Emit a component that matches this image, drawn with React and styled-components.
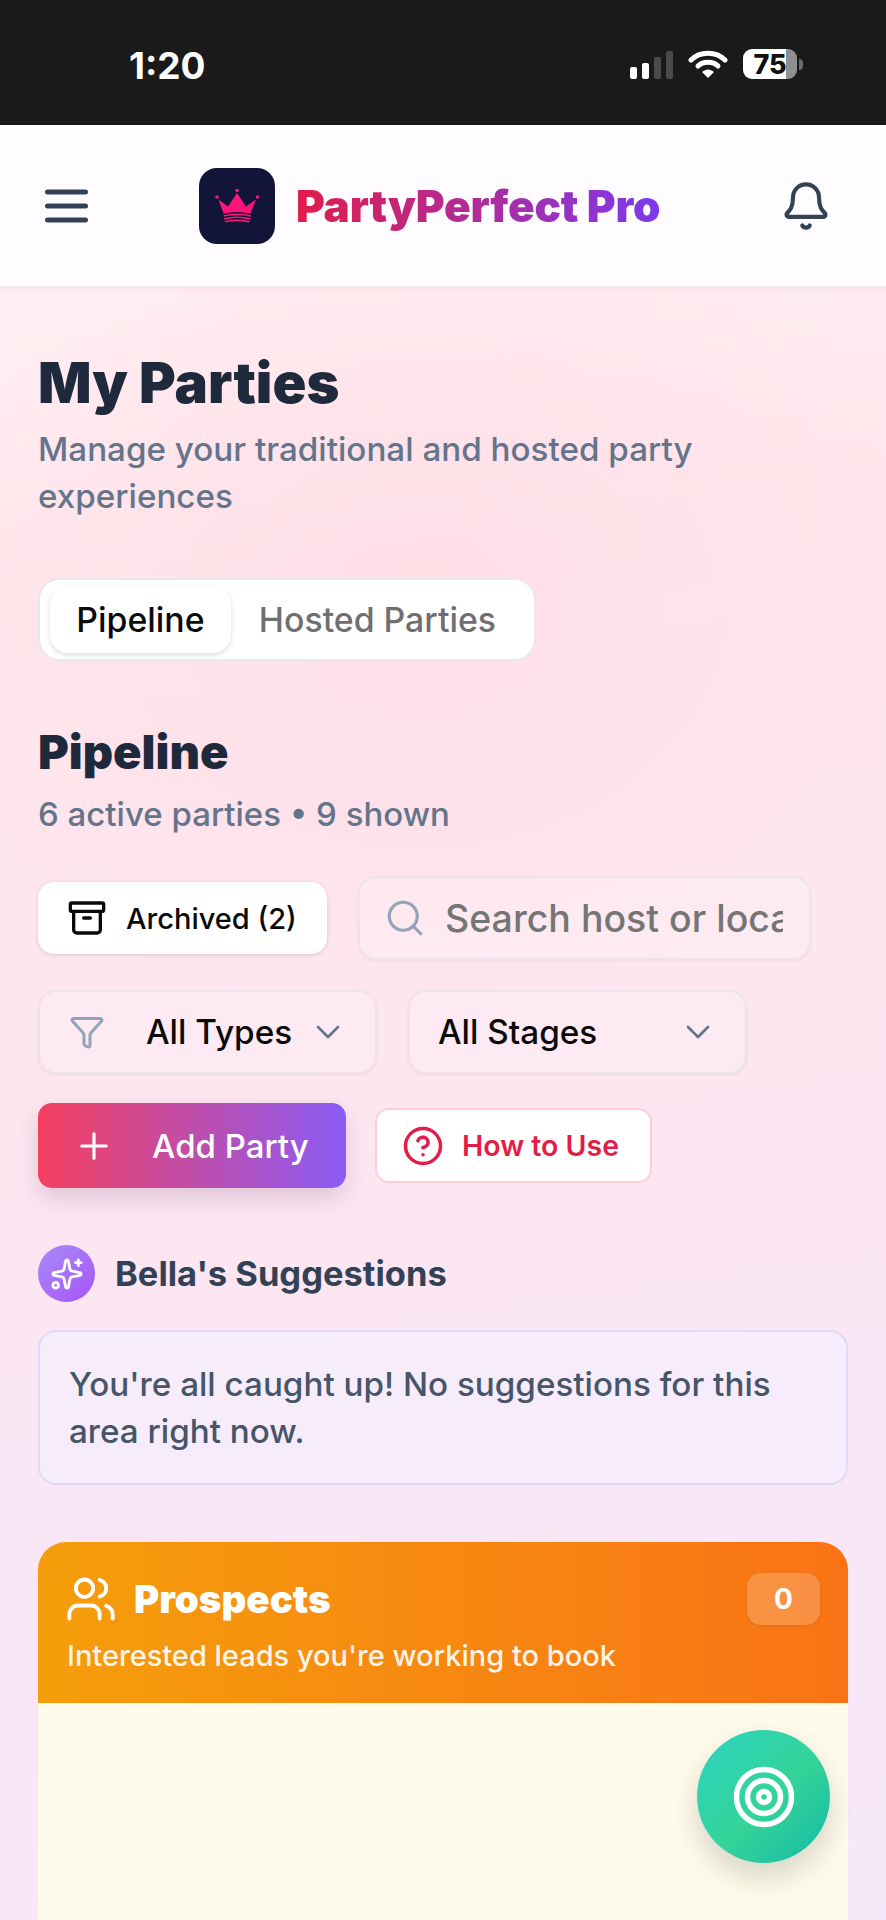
import React from "react";
import styled, { createGlobalStyle } from "styled-components";
import { Bell, Archive, Search, Funnel, ChevronDown, Plus, CircleHelp, Sparkles, Users, Target } from "lucide-react";

const Global = createGlobalStyle`
  html, body { margin: 0; padding: 0; }
  body { font-family: Inter, "Noto Sans", sans-serif; width: 886px; height: 1920px; overflow: hidden; }
  * { box-sizing: border-box; }
`;

const Page = styled.div`
  position: relative;
  width: 886px;
  height: 1920px;
  overflow: hidden;
  background:
    radial-gradient(520px 420px at 420px 600px, rgba(255, 218, 228, 0.7), rgba(255, 220, 230, 0) 100%),
    linear-gradient(172deg, #fff1f4 12%, #ffe6ec 30%, #fde6f0 55%, #f9e6f6 80%, #f6e8fa 100%);
`;

const StatusBar = styled.div`
  height: 125px;
  background: #1a1a1a;
  display: flex;
  align-items: flex-end;
  justify-content: space-between;
  padding: 0 83px 46px 129px;
  color: #fff;
`;
const Clock = styled.span`
  font-size: 37px;
  font-weight: 700;
  line-height: 26px;
  height: 26px;
`;
const StatusIcons = styled.div`
  display: flex;
  align-items: flex-end;
  gap: 15px;
`;
const Signal = styled.div`
  display: flex;
  align-items: flex-end;
  gap: 5px;
`;
const SignalBar = styled.i`
  display: block;
  width: 7px;
  height: ${(p) => p.$h}px;
  border-radius: 2px;
  background: ${(p) => (p.$on ? "#fff" : "#4b4b4b")};
`;
const Battery = styled.div`
  display: flex;
  align-items: center;
  gap: 2px;
`;
const BatteryBody = styled.div`
  width: 54px;
  height: 30px;
  border-radius: 9px;
  background: linear-gradient(90deg, #fff 0 80%, #8f8f8f 80%);
  color: #111;
  font-size: 27px;
  font-weight: 800;
  display: flex;
  align-items: center;
  justify-content: center;
`;
const BatteryNub = styled.i`
  display: block;
  width: 4px;
  height: 11px;
  border-radius: 0 4px 4px 0;
  background: #6b6b6b;
`;

const Header = styled.header`
  height: 163px;
  background: #fefcfe;
  border-bottom: 2px solid #f1e9ee;
  display: flex;
  align-items: center;
  padding: 0 54px 0 45px;
  box-shadow: 0 2px 6px rgba(0, 0, 0, 0.03);
`;
const MenuButton = styled.svg`
  width: 43px;
  height: 34px;
  color: #334155;
  flex: none;
`;
const Brand = styled.div`
  display: flex;
  align-items: center;
  gap: 21px;
  margin-left: 111px;
  flex: 1;
`;
const LogoTile = styled.div`
  width: 76px;
  height: 76px;
  border-radius: 18px;
  background: #12143a;
  display: flex;
  align-items: center;
  justify-content: center;
`;
const BrandName = styled.span`
  font-size: 44px;
  font-weight: 900;
  letter-spacing: -0.2px;
  background: linear-gradient(90deg, #e11d48, #7c3aed);
  -webkit-background-clip: text;
  background-clip: text;
  color: transparent;
`;
const BellIcon = styled(Bell)`
  color: #334155;
  flex: none;
`;

const Main = styled.main`
  padding: 0 38px;
`;
const Title = styled.h1`
  margin: 64px 0 0;
  font-size: 56px;
  line-height: 62px;
  font-weight: 900;
  color: #1e293b;
`;
const Subtitle = styled.p`
  margin: 12px 0 0;
  width: 720px;
  font-size: 33.2px;
  line-height: 47px;
  font-weight: 500;
  color: #64748b;
`;
const Tabs = styled.div`
  margin-top: 58px;
  width: 498px;
  height: 83px;
  padding: 6px 10px;
  background: #fff;
  border: 2px solid #e8e8f0;
  border-radius: 22px;
  display: flex;
  align-items: center;
`;
const Tab = styled.div`
  height: 67px;
  width: ${(p) => (p.$active ? "184px" : "auto")};
  padding: ${(p) => (p.$active ? "0" : "0 28px")};
  display: flex;
  align-items: center;
  justify-content: center;
  white-space: nowrap;
  font-size: 33.8px;
  font-weight: 500;
  color: ${(p) => (p.$active ? "#0a0a0a" : "#6f6f73")};
  background: ${(p) => (p.$active ? "#fff" : "transparent")};
  border-radius: 18px;
  box-shadow: ${(p) => (p.$active ? "0 2px 5px rgba(0,0,0,.14)" : "none")};
`;
const SectionTitle = styled.h2`
  margin: 63px 0 0;
  font-size: 47px;
  line-height: 56px;
  font-weight: 900;
  color: #1e293b;
`;
const Count = styled.p`
  margin: 12px 0 0;
  font-size: 33px;
  line-height: 44px;
  font-weight: 500;
  color: #64748b;
`;
const Row = styled.div`
  display: flex;
  align-items: center;
  gap: ${(p) => p.$gap || 31}px;
  margin-top: ${(p) => p.$top}px;
`;
const ArchivedButton = styled.div`
  width: 289px;
  height: 72px;
  background: #fff;
  border-radius: 16px;
  box-shadow: 0 1px 4px rgba(0, 0, 0, 0.14);
  display: flex;
  align-items: center;
  gap: 19px;
  padding-left: 29px;
  font-size: 29px;
  font-weight: 500;
  color: #0a0a0a;
`;
const SearchBox = styled.div`
  width: 453px;
  height: 84px;
  border: 2px solid #ece4ea;
  border-radius: 18px;
  box-shadow: 0 1px 3px rgba(0, 0, 0, 0.06);
  background: rgba(255, 255, 255, 0.2);
  display: flex;
  align-items: center;
  gap: 19px;
  padding: 0 26px 0 24px;
  color: #94a3b8;
`;
const SearchIcon = styled(Search)`
  flex: none;
`;
const SearchInput = styled.input`
  flex: 1;
  min-width: 0;
  border: 0;
  outline: 0;
  background: transparent;
  font-family: inherit;
  font-size: 37.5px;
  font-weight: 500;
  padding: 0;
  &::placeholder { color: #757575; opacity: 1; }
`;
const Select = styled.div`
  width: ${(p) => p.$w}px;
  height: 84px;
  border: 2px solid #ece4ea;
  border-radius: 18px;
  box-shadow: 0 1px 3px rgba(0, 0, 0, 0.08);
  background: rgba(255, 255, 255, 0.18);
  display: flex;
  align-items: center;
  padding: 0 27px 0 28px;
  font-size: 33.3px;
  font-weight: 500;
  color: #0a0a0a;
`;
const SelectLabel = styled.span`
  flex: 1;
`;
const FunnelIcon = styled(Funnel)`
  color: #94a3b8;
  margin: 0 41px 0 1px;
  flex: none;
`;
const Caret = styled(ChevronDown)`
  color: #64748b;
  flex: none;
`;
const AddButton = styled.div`
  width: 308px;
  height: 85px;
  border-radius: 14px;
  background: linear-gradient(90deg, #f43f5e, #8b5cf6);
  box-shadow: 0 10px 22px rgba(90, 40, 90, 0.17);
  display: flex;
  align-items: center;
  gap: 37px;
  padding-left: 35px;
  color: #fff;
  font-size: 33px;
  font-weight: 500;
`;
const HelpButton = styled.div`
  width: 277px;
  height: 75px;
  background: #fff;
  border: 2px solid #fecdd6;
  border-radius: 14px;
  display: flex;
  align-items: center;
  gap: 18px;
  padding-left: 25px;
  color: #e11d48;
  font-size: 28.5px;
  font-weight: 600;
`;
const SuggestHead = styled.div`
  display: flex;
  align-items: center;
  gap: 20px;
  margin-top: 57px;
`;
const SparkBadge = styled.div`
  width: 57px;
  height: 57px;
  border-radius: 50%;
  background: linear-gradient(135deg, #a78bfa, #a855f7);
  color: #fff;
  display: flex;
  align-items: center;
  justify-content: center;
`;
const SuggestTitle = styled.span`
  font-size: 34.5px;
  font-weight: 700;
  color: #334155;
`;
const SuggestBox = styled.div`
  margin-top: 28px;
  width: 810px;
  height: 155px;
  padding: 29px 29px 0;
  border: 2px solid #e0d9f8;
  border-radius: 18px;
  background: rgba(245, 240, 255, 0.6);
  font-size: 33.2px;
  line-height: 47px;
  font-weight: 500;
  color: #475569;
`;
const Card = styled.section`
  margin-top: 57px;
  width: 810px;
  border-radius: 28px 28px 0 0;
  overflow: hidden;
`;
const CardHead = styled.div`
  height: 161px;
  padding: 30px 28px 0 27px;
  background: linear-gradient(90deg, #f59e0b, #f97316);
  color: #fff;
`;
const CardTop = styled.div`
  display: flex;
  align-items: center;
  height: 54px;
  gap: 17px;
`;
const CardTitle = styled.span`
  flex: 1;
  font-size: 38.5px;
  font-weight: 900;
`;
const CountBadge = styled.div`
  width: 73px;
  height: 52px;
  border-radius: 14px;
  background: rgba(255, 255, 255, 0.2);
  box-shadow: 0 1px 3px rgba(0, 0, 0, 0.08);
  display: flex;
  align-items: center;
  justify-content: center;
  font-size: 28px;
  font-weight: 700;
`;
const CardSub = styled.p`
  margin: 10px 0 0 2px;
  font-size: 29px;
  line-height: 40px;
  font-weight: 500;
  color: rgba(255, 255, 255, 0.92);
`;
const CardBody = styled.div`
  height: 300px;
  background: #fffbeb;
`;
const Fab = styled.div`
  position: absolute;
  left: 697px;
  top: 1730px;
  width: 133px;
  height: 133px;
  border-radius: 50%;
  background: linear-gradient(135deg, #2dd4bf, #34d399 55%, #14b8a6);
  box-shadow: 0 14px 30px rgba(0, 0, 0, 0.16);
  color: #fff;
  display: flex;
  align-items: center;
  justify-content: center;
`;

export default function App() {
  return (
    <Page>
      <Global />
      <StatusBar>
        <Clock>1:20</Clock>
        <StatusIcons>
          <Signal>
            <SignalBar $h={12} $on />
            <SignalBar $h={16} $on />
            <SignalBar $h={22} />
            <SignalBar $h={28} />
          </Signal>
          <svg width="40" height="30" viewBox="0 0 40 30" fill="none" stroke="#fff" strokeLinecap="round">
            <path d="M3 11 C12 2 28 2 37 11" strokeWidth="5" />
            <path d="M10 17 C15 12 25 12 30 17" strokeWidth="5" />
            <path d="M14 23 L20 29 L26 23 C22 19.5 18 19.5 14 23 Z" fill="#fff" stroke="none" />
          </svg>
          <Battery>
            <BatteryBody>75</BatteryBody>
            <BatteryNub />
          </Battery>
        </StatusIcons>
      </StatusBar>
      <Header>
        <MenuButton viewBox="0 0 43 34" fill="none" stroke="currentColor" strokeWidth="5" strokeLinecap="round">
          <path d="M2.5 3h38M2.5 17h38M2.5 31h38" />
        </MenuButton>
        <Brand>
          <LogoTile>
            <svg width="76" height="76" viewBox="0 0 76 76" fill="#ff1478">
              <circle cx="18" cy="29" r="1.8" />
              <circle cx="38" cy="22.5" r="1.8" />
              <circle cx="58.5" cy="29" r="1.8" />
              <path d="M19.5 31.5 L29 38.5 L38 25 L47 38.5 L57 31.5 L51.5 45.5 Q38 42.5 24.5 45.5 Z" />
              <path d="M24.5 48 Q38 44.5 52 48" fill="none" stroke="#ff1478" strokeWidth="1.5" />
              <path d="M25 51 Q38 47.5 51.5 51" fill="none" stroke="#ff1478" strokeWidth="1.5" />
              <path d="M26 53.8 Q38 50.5 50.5 53.8" fill="none" stroke="#ff1478" strokeWidth="1.5" />
            </svg>
          </LogoTile>
          <BrandName>PartyPerfect Pro</BrandName>
        </Brand>
        <BellIcon size={52} strokeWidth={1.9} />
      </Header>
      <Main>
        <Title>My Parties</Title>
        <Subtitle>Manage your traditional and hosted party experiences</Subtitle>
        <Tabs>
          <Tab $active>Pipeline</Tab>
          <Tab>Hosted Parties</Tab>
        </Tabs>
        <SectionTitle>Pipeline</SectionTitle>
        <Count>6 active parties • 9 shown</Count>
        <Row $top={40}>
          <ArchivedButton>
            <Archive size={40} strokeWidth={2} />
            Archived (2)
          </ArchivedButton>
          <SearchBox>
            <SearchIcon size={42} strokeWidth={1.8} />
            <SearchInput placeholder="Search host or location..." />
          </SearchBox>
        </Row>
        <Row $top={30}>
          <Select $w={339}>
            <FunnelIcon size={36} strokeWidth={2} />
            <SelectLabel>All Types</SelectLabel>
            <Caret size={40} strokeWidth={1.6} />
          </Select>
          <Select $w={339}>
            <SelectLabel>All Stages</SelectLabel>
            <Caret size={40} strokeWidth={1.6} />
          </Select>
        </Row>
        <Row $top={29} $gap={29}>
          <AddButton>
            <Plus size={42} strokeWidth={1.8} />
            Add Party
          </AddButton>
          <HelpButton>
            <CircleHelp size={42} strokeWidth={2} />
            How to Use
          </HelpButton>
        </Row>
        <SuggestHead>
          <SparkBadge>
            <Sparkles size={34} strokeWidth={2} />
          </SparkBadge>
          <SuggestTitle>Bella's Suggestions</SuggestTitle>
        </SuggestHead>
        <SuggestBox>You're all caught up! No suggestions for this area right now.</SuggestBox>
        <Card>
          <CardHead>
            <CardTop>
              <Users size={52} strokeWidth={1.8} />
              <CardTitle>Prospects</CardTitle>
              <CountBadge>0</CountBadge>
            </CardTop>
            <CardSub>Interested leads you're working to book</CardSub>
          </CardHead>
          <CardBody />
        </Card>
      </Main>
      <Fab>
        <Target size={66} strokeWidth={2} />
      </Fab>
    </Page>
  );
}
